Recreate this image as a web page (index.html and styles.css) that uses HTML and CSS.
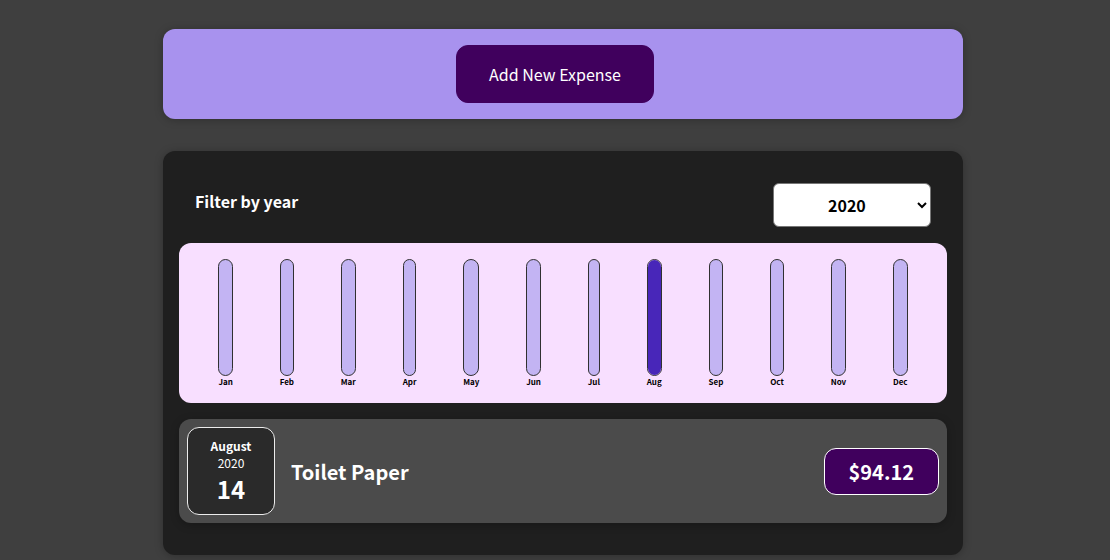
FILE: index.html
```html
<!DOCTYPE html>
<html lang="en">
<head>
<meta charset="utf-8">
<title>Expenses</title>
<link rel="stylesheet" href="styles.css">
</head>
<body>
<div class="root">
  <div class="new-expense">
    <button class="new-expense__btn" type="button">Add New Expense</button>
  </div>
  <div class="expenses">
    <div class="expenses-filter">
      <div class="expenses-filter__control">
        <label class="expenses-filter__label">Filter by year</label>
        <select class="expenses-filter__select">
          <option>2022</option>
          <option>2021</option>
          <option selected>2020</option>
          <option>2019</option>
        </select>
      </div>
    </div>
    <div class="chart">
      <div class="chart-bar"><div class="chart-bar__inner"><div class="chart-bar__fill" style="height:0%"></div></div><div class="chart-bar__label">Jan</div></div>
      <div class="chart-bar"><div class="chart-bar__inner"><div class="chart-bar__fill" style="height:0%"></div></div><div class="chart-bar__label">Feb</div></div>
      <div class="chart-bar"><div class="chart-bar__inner"><div class="chart-bar__fill" style="height:0%"></div></div><div class="chart-bar__label">Mar</div></div>
      <div class="chart-bar"><div class="chart-bar__inner"><div class="chart-bar__fill" style="height:0%"></div></div><div class="chart-bar__label">Apr</div></div>
      <div class="chart-bar"><div class="chart-bar__inner"><div class="chart-bar__fill" style="height:0%"></div></div><div class="chart-bar__label">May</div></div>
      <div class="chart-bar"><div class="chart-bar__inner"><div class="chart-bar__fill" style="height:0%"></div></div><div class="chart-bar__label">Jun</div></div>
      <div class="chart-bar"><div class="chart-bar__inner"><div class="chart-bar__fill" style="height:0%"></div></div><div class="chart-bar__label">Jul</div></div>
      <div class="chart-bar"><div class="chart-bar__inner"><div class="chart-bar__fill" style="height:100%"></div></div><div class="chart-bar__label">Aug</div></div>
      <div class="chart-bar"><div class="chart-bar__inner"><div class="chart-bar__fill" style="height:0%"></div></div><div class="chart-bar__label">Sep</div></div>
      <div class="chart-bar"><div class="chart-bar__inner"><div class="chart-bar__fill" style="height:0%"></div></div><div class="chart-bar__label">Oct</div></div>
      <div class="chart-bar"><div class="chart-bar__inner"><div class="chart-bar__fill" style="height:0%"></div></div><div class="chart-bar__label">Nov</div></div>
      <div class="chart-bar"><div class="chart-bar__inner"><div class="chart-bar__fill" style="height:0%"></div></div><div class="chart-bar__label">Dec</div></div>
    </div>
    <ul class="expenses-list">
      <li>
        <div class="expense-item">
          <div class="expense-date">
            <div class="expense-date__month">August</div>
            <div class="expense-date__year">2020</div>
            <div class="expense-date__day">14</div>
          </div>
          <div class="expense-item__description">
            <h2 class="expense-item__title">Toilet Paper</h2>
            <div class="expense-item__price">$94.12</div>
          </div>
        </div>
      </li>
    </ul>
  </div>
</div>
</body>
</html>
```

FILE: styles.css
```css
* {
  box-sizing: border-box;
}

html {
  font-family: "Noto Sans CJK JP", "Noto Sans", sans-serif;
}

body {
  margin: 0;
  background-color: #3f3f3f;
}

.root {
  padding-top: 1px;
  padding-left: 16px;
}

.new-expense {
  background-color: #a892ee;
  padding: 1rem;
  margin: 28px auto 2rem;
  width: 50rem;
  border-radius: 12px;
  text-align: center;
  box-shadow: 0 1px 8px rgba(0, 0, 0, 0.25);
}

.new-expense__btn {
  font: inherit;
  cursor: pointer;
  padding: 1rem 2rem;
  border: 1px solid #40005d;
  background-color: #40005d;
  color: white;
  border-radius: 12px;
  margin-right: 1rem;
}

.expenses {
  padding: 1rem;
  background-color: #1f1f1f;
  margin: 2rem auto;
  width: 50rem;
  border-radius: 12px;
  box-shadow: 0 1px 8px rgba(0, 0, 0, 0.25);
}

.expenses-filter {
  color: white;
  padding: 0 1rem;
}

.expenses-filter__control {
  display: flex;
  width: 100%;
  align-items: center;
  justify-content: space-between;
  margin: 1rem 0;
}

.expenses-filter__label {
  font-weight: bold;
  margin-bottom: 0.5rem;
}

.expenses-filter__select {
  font: inherit;
  padding: 0.5rem 3rem 0.5rem 3.125rem;
  font-weight: bold;
  border-radius: 6px;
  background-color: white;
  color: black;
}

.chart {
  padding: 1rem;
  border-radius: 12px;
  background-color: #f8dfff;
  text-align: center;
  display: flex;
  justify-content: space-around;
  height: 10rem;
}

.chart-bar {
  height: 100%;
  display: flex;
  flex-direction: column;
  align-items: center;
}

.chart-bar__inner {
  height: 100%;
  width: 100%;
  border: 1px solid #313131;
  border-radius: 12px;
  background-color: #c3b4f3;
  overflow: hidden;
  display: flex;
  flex-direction: column;
  justify-content: flex-end;
}

.chart-bar__fill {
  background-color: #4826b9;
  width: 100%;
}

.chart-bar__label {
  font-weight: bold;
  font-size: 0.5rem;
  text-align: center;
}

.expenses-list {
  list-style: none;
  padding: 0;
}

.expense-item {
  display: flex;
  justify-content: space-between;
  align-items: center;
  box-shadow: 0 2px 8px rgba(0, 0, 0, 0.25);
  padding: 0.5rem;
  margin: 1rem 0;
  border-radius: 12px;
  background-color: #4b4b4b;
}

.expense-date {
  display: flex;
  flex-direction: column;
  width: 5.5rem;
  height: 5.5rem;
  border: 1px solid #ececec;
  background-color: #2a2a2a;
  color: white;
  border-radius: 12px;
  align-items: center;
  justify-content: center;
}

.expense-date__month {
  font-size: 0.75rem;
  font-weight: bold;
}

.expense-date__year {
  font-size: 0.75rem;
}

.expense-date__day {
  font-size: 1.5rem;
  font-weight: bold;
}

.expense-item__description {
  display: flex;
  flex-direction: row;
  align-items: center;
  justify-content: flex-start;
  flex: 1;
  gap: 1rem;
}

.expense-item__title {
  color: white;
  font-size: 1.25rem;
  flex: 1;
  margin: 0 1rem;
}

.expense-item__price {
  font-size: 1.25rem;
  font-weight: bold;
  color: white;
  background-color: #40005d;
  border: 1px solid white;
  padding: 0.5rem 1.5rem;
  border-radius: 12px;
}
```
